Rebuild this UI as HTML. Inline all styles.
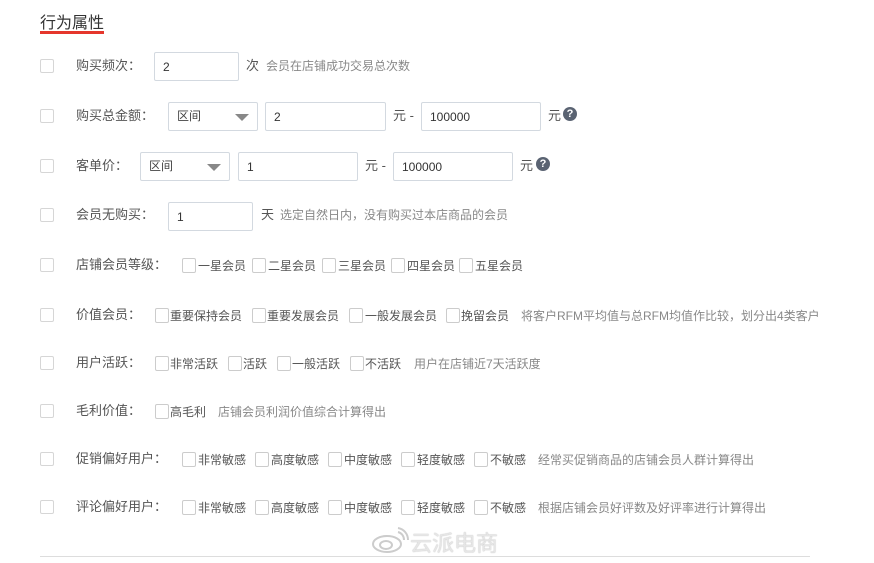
<!DOCTYPE html><html><head><meta charset="utf-8"><style>
body{margin:0;width:874px;height:563px;background:#fff;position:relative;overflow:hidden;font-family:"Liberation Sans","Noto Sans CJK SC",sans-serif;}
.a{position:absolute;white-space:nowrap}
.t{font-size:16px;color:#333;left:40px;top:9px}
.ul{left:40px;top:31px;width:64px;height:3px;background:#e5362c}
.cb{width:12px;height:12px;border:1px solid #d6d6d6;border-radius:2px;background:#fff}
.cs{width:12px;height:13px;border:1px solid #ccc;border-radius:2px}
.l{font-size:13px;color:#555;line-height:16px}
.o{font-size:12px;color:#555;line-height:16px}
.d{font-size:12px;color:#888;line-height:16px}
.in{border:1px solid #d3d9e0;border-radius:2px;height:27px;box-sizing:border-box;font-size:12px;color:#333;line-height:27px;padding-left:8px}
.sel{border:1px solid #d3d9e0;border-radius:2px;height:29px;box-sizing:border-box;font-size:12px;color:#444;line-height:27px;padding-left:8px}
.sel:after{content:"";position:absolute;right:8px;top:11px;border-left:7px solid transparent;border-right:7px solid transparent;border-top:7px solid #888}
.q{width:14px;height:14px;border-radius:50%;background:#5a6372;color:#fff;font-size:11px;font-weight:bold;text-align:center;line-height:14px}
</style></head><body>
<div class="a t">行为属性</div><div class="a ul"></div>

<div class="a cb" style="left:40px;top:59px"></div><div class="a l" style="left:76px;top:58px">购买频次：</div>
<div class="a in" style="left:154px;top:52px;width:85px;height:29px;line-height:29px">2</div>
<div class="a l" style="left:246px;top:58px">次</div><div class="a d" style="left:266px;top:58px">会员在店铺成功交易总次数</div>

<div class="a cb" style="left:40px;top:109px"></div><div class="a l" style="left:76px;top:108px">购买总金额：</div>
<div class="a sel" style="left:168px;top:102px;width:90px">区间</div>
<div class="a in" style="left:265px;top:102px;width:121px;height:29px;line-height:29px">2</div>
<div class="a l" style="left:393px;top:108px">元 -</div>
<div class="a in" style="left:421px;top:102px;width:120px;height:29px;line-height:29px">100000</div>
<div class="a l" style="left:548px;top:108px">元</div><div class="a q" style="left:563px;top:107px">?</div>

<div class="a cb" style="left:40px;top:159px"></div><div class="a l" style="left:76px;top:158px">客单价：</div>
<div class="a sel" style="left:140px;top:152px;width:90px">区间</div>
<div class="a in" style="left:238px;top:152px;width:120px;height:29px;line-height:29px">1</div>
<div class="a l" style="left:365px;top:158px">元 -</div>
<div class="a in" style="left:393px;top:152px;width:120px;height:29px;line-height:29px">100000</div>
<div class="a l" style="left:520px;top:158px">元</div><div class="a q" style="left:536px;top:157px">?</div>

<div class="a cb" style="left:40px;top:208px"></div><div class="a l" style="left:76px;top:207px">会员无购买：</div>
<div class="a in" style="left:168px;top:202px;width:85px;height:29px;line-height:29px">1</div>
<div class="a l" style="left:261px;top:207px">天</div><div class="a d" style="left:280px;top:207px">选定自然日内，没有购买过本店商品的会员</div>

<div class="a cb" style="left:40px;top:258px"></div><div class="a l" style="left:76px;top:257px">店铺会员等级：</div>
<div class="a cs" style="left:182px;top:258px"></div><div class="a o" style="left:198px;top:258px">一星会员</div>
<div class="a cs" style="left:252px;top:258px"></div><div class="a o" style="left:268px;top:258px">二星会员</div>
<div class="a cs" style="left:322px;top:258px"></div><div class="a o" style="left:338px;top:258px">三星会员</div>
<div class="a cs" style="left:391px;top:258px"></div><div class="a o" style="left:407px;top:258px">四星会员</div>
<div class="a cs" style="left:459px;top:258px"></div><div class="a o" style="left:475px;top:258px">五星会员</div>

<div class="a cb" style="left:40px;top:308px"></div><div class="a l" style="left:76px;top:307px">价值会员：</div>
<div class="a cs" style="left:155px;top:308px"></div><div class="a o" style="left:170px;top:308px">重要保持会员</div>
<div class="a cs" style="left:252px;top:308px"></div><div class="a o" style="left:267px;top:308px">重要发展会员</div>
<div class="a cs" style="left:349px;top:308px"></div><div class="a o" style="left:365px;top:308px">一般发展会员</div>
<div class="a cs" style="left:446px;top:308px"></div><div class="a o" style="left:461px;top:308px">挽留会员</div>
<div class="a d" style="left:521px;top:308px">将客户RFM平均值与总RFM均值作比较，划分出4类客户</div>

<div class="a cb" style="left:40px;top:356px"></div><div class="a l" style="left:76px;top:355px">用户活跃：</div>
<div class="a cs" style="left:155px;top:356px"></div><div class="a o" style="left:170px;top:356px">非常活跃</div>
<div class="a cs" style="left:228px;top:356px"></div><div class="a o" style="left:243px;top:356px">活跃</div>
<div class="a cs" style="left:277px;top:356px"></div><div class="a o" style="left:292px;top:356px">一般活跃</div>
<div class="a cs" style="left:350px;top:356px"></div><div class="a o" style="left:365px;top:356px">不活跃</div>
<div class="a d" style="left:414px;top:356px">用户在店铺近7天活跃度</div>

<div class="a cb" style="left:40px;top:404px"></div><div class="a l" style="left:76px;top:403px">毛利价值：</div>
<div class="a cs" style="left:155px;top:404px"></div><div class="a o" style="left:170px;top:404px">高毛利</div>
<div class="a d" style="left:218px;top:404px">店铺会员利润价值综合计算得出</div>

<div class="a cb" style="left:40px;top:452px"></div><div class="a l" style="left:76px;top:451px">促销偏好用户：</div>
<div class="a cs" style="left:182px;top:452px"></div><div class="a o" style="left:198px;top:452px">非常敏感</div>
<div class="a cs" style="left:255px;top:452px"></div><div class="a o" style="left:271px;top:452px">高度敏感</div>
<div class="a cs" style="left:328px;top:452px"></div><div class="a o" style="left:344px;top:452px">中度敏感</div>
<div class="a cs" style="left:401px;top:452px"></div><div class="a o" style="left:417px;top:452px">轻度敏感</div>
<div class="a cs" style="left:474px;top:452px"></div><div class="a o" style="left:490px;top:452px">不敏感</div>
<div class="a d" style="left:538px;top:452px">经常买促销商品的店铺会员人群计算得出</div>

<div class="a cb" style="left:40px;top:500px"></div><div class="a l" style="left:76px;top:499px">评论偏好用户：</div>
<div class="a cs" style="left:182px;top:500px"></div><div class="a o" style="left:198px;top:500px">非常敏感</div>
<div class="a cs" style="left:255px;top:500px"></div><div class="a o" style="left:271px;top:500px">高度敏感</div>
<div class="a cs" style="left:328px;top:500px"></div><div class="a o" style="left:344px;top:500px">中度敏感</div>
<div class="a cs" style="left:401px;top:500px"></div><div class="a o" style="left:417px;top:500px">轻度敏感</div>
<div class="a cs" style="left:474px;top:500px"></div><div class="a o" style="left:490px;top:500px">不敏感</div>
<div class="a d" style="left:538px;top:500px">根据店铺会员好评数及好评率进行计算得出</div>

<svg class="a" style="left:370px;top:526px" width="40" height="28" viewBox="0 0 40 28"><ellipse cx="17" cy="18" rx="14" ry="8" fill="none" stroke="#ccc" stroke-width="2"/><ellipse cx="16" cy="19" rx="6" ry="4" fill="none" stroke="#ccc" stroke-width="2"/><path d="M28 6a8 8 0 0 1 6 8M28 2a12 12 0 0 1 10 12" fill="none" stroke="#ccc" stroke-width="2"/></svg>
<div class="a" style="left:410px;top:526px;font-size:22px;font-weight:normal;color:#e6e6e6;text-shadow:0 0 1px #aaa">云派电商</div>
<div class="a" style="left:40px;top:556px;width:770px;height:1px;background:#ddd"></div>
</body></html>
